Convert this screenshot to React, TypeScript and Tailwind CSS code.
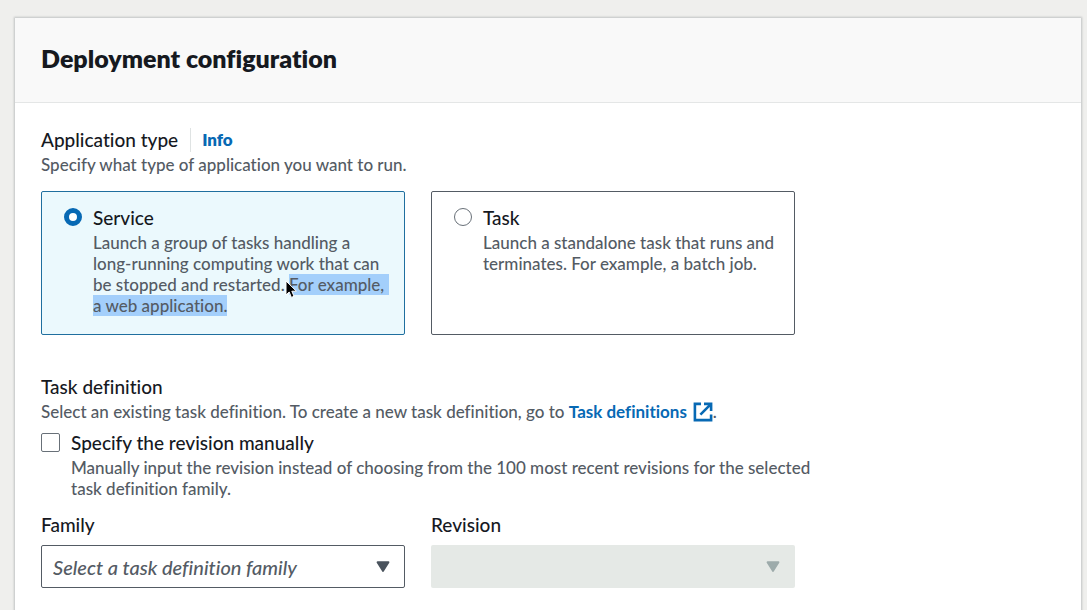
import type { ReactNode } from "react";

const labelText = "text-[19px] leading-6 font-medium text-[#16191f]";
const hintText = "text-[17px] leading-[21px] font-medium text-[#545b64]";

function Caret({ className }: { className: string }) {
  return (
    <svg
      aria-hidden="true"
      viewBox="0 0 14 12"
      className={`pointer-events-none absolute top-4 right-[15px] h-3 w-3.5 ${className}`}
    >
      <path d="M1.5 1.2h11L7 10z" fill="currentColor" stroke="currentColor" strokeWidth="1.8" strokeLinejoin="round" />
    </svg>
  );
}

function Pointer() {
  return (
    <svg aria-hidden="true" viewBox="0 0 14 20" className="absolute top-1.5 -left-1 h-5 w-3.5">
      <path
        d="M1 1v14l3.2-3 2.2 5.4 2.6-1.1-2.2-5.1h4.6z"
        fill="#000"
        stroke="#fff"
        strokeWidth="1"
        strokeLinejoin="round"
      />
    </svg>
  );
}

function ExternalIcon() {
  return (
    <svg aria-hidden="true" viewBox="0 0 20 20" className="ml-1.5 inline-block size-5 align-[-4px]">
      <path d="M8 1.9H1.9v16.2h16.2v-5.6" fill="none" stroke="currentColor" strokeWidth="2.6" />
      <path d="M11 1.9h7.1V9M17.6 2.4L7.4 12.6" fill="none" stroke="currentColor" strokeWidth="2.6" />
    </svg>
  );
}

function Tile({ value, title, checked, children }: { value: string; title: string; checked?: boolean; children: ReactNode }) {
  return (
    <label className="flex gap-[11px] rounded-xs border border-[#545b64] bg-white pt-3.5 pr-3 pb-[18px] pl-[22px] has-checked:border-[#1f6f9f] has-checked:bg-[#ebf9fd]">
      <input
        type="radio"
        name="application-type"
        value={value}
        defaultChecked={checked}
        className="mt-0.5 size-[18px] shrink-0 appearance-none rounded-full border border-[#687078] bg-white checked:border-[5px] checked:border-[#0769b4]"
      />
      <span className="min-w-0">
        <span className={`block ${labelText}`}>{title}</span>
        <span className={`mt-0.5 block ${hintText}`}>{children}</span>
      </span>
    </label>
  );
}

export default function App() {
  return (
    <div className="min-h-screen bg-[#efefed] pt-[18px] pr-1.5 pl-[15px] font-['Lato','Noto_Sans',sans-serif] [font-variant-ligatures:no-common-ligatures]">
      <main className="min-h-[592px] bg-white shadow-[0_0_2px_1px_rgba(0,20,30,0.2)]">
        <header className="border-b border-[#e4e6e6] bg-[#f9f9f9] px-[26px] pt-6 pb-7">
          <h1 className="text-[25px] leading-8 font-extrabold text-[#16191f]">Deployment configuration</h1>
        </header>
        <form className="max-w-[842px] px-[26px] pt-[25px] pb-6">
          <fieldset>
            <legend className="flex items-center">
              <span className={labelText}>Application type</span>
              <a href="#info" className="ml-3 border-l border-[#dfe3e3] pl-[11px] text-[17px] leading-6 font-extrabold text-[#0769b4]">
                Info
              </a>
            </legend>
            <p className={`mt-0.5 ${hintText}`}>Specify what type of application you want to run.</p>
            <div className="mt-4 grid max-w-[754px] grid-cols-2 gap-[26px]">
              <Tile value="service" title="Service" checked>
                Launch a group of tasks handling a <span className="whitespace-nowrap">long-running</span> computing work
                that can be stopped and restarted.{" "}
                <span className="relative bg-[#a3cffb]">
                  For example,&nbsp;
                  <br />a web application.
                  <Pointer />
                </span>
              </Tile>
              <Tile value="task" title="Task">
                Launch a standalone task that runs and terminates. For example, a batch job.
              </Tile>
            </div>
          </fieldset>

          <section className="mt-10">
            <h2 className={labelText}>Task definition</h2>
            <p className={`mt-0.5 ${hintText}`}>
              Select an existing task definition. To create a new task definition, go to{" "}
              <a href="#task-definitions" className="font-bold text-[#0769b4]">
                Task definitions
                <ExternalIcon />
              </a>
              .
            </p>
            <div className="mt-[9px] flex gap-[11px]">
              <input
                id="manual"
                type="checkbox"
                aria-describedby="manual-hint"
                className="mt-0.5 size-[19px] shrink-0 appearance-none rounded-xs border border-[#687078] bg-white checked:bg-[#0769b4]"
              />
              <div>
                <label htmlFor="manual" className={`block ${labelText}`}>
                  Specify the revision manually
                </label>
                <p id="manual-hint" className={`mt-0.5 ${hintText}`}>
                  Manually input the revision instead of choosing from the 100 most recent revisions for the selected task
                  definition family.
                </p>
              </div>
            </div>
            <div className="mt-3.5 grid max-w-[754px] grid-cols-2 gap-[26px]">
              <div>
                <label htmlFor="family" className={`block ${labelText}`}>
                  Family
                </label>
                <div className="relative mt-2">
                  <select
                    id="family"
                    defaultValue=""
                    className="block h-[43px] w-full appearance-none rounded-xs border border-[#545b64] bg-white px-[11px] text-xl font-medium text-[#545b64] italic"
                  >
                    <option value="">Select a task definition family</option>
                  </select>
                  <Caret className="text-[#4a535d]" />
                </div>
              </div>
              <div>
                <label htmlFor="revision" className={`block ${labelText}`}>
                  Revision
                </label>
                <div className="relative mt-2">
                  <select
                    id="revision"
                    disabled
                    className="block h-[43px] w-full appearance-none rounded-xs bg-[#e5e9e6] px-[11px] text-xl"
                  />
                  <Caret className="text-[#9dabab]" />
                </div>
              </div>
            </div>
          </section>
        </form>
      </main>
    </div>
  );
}
